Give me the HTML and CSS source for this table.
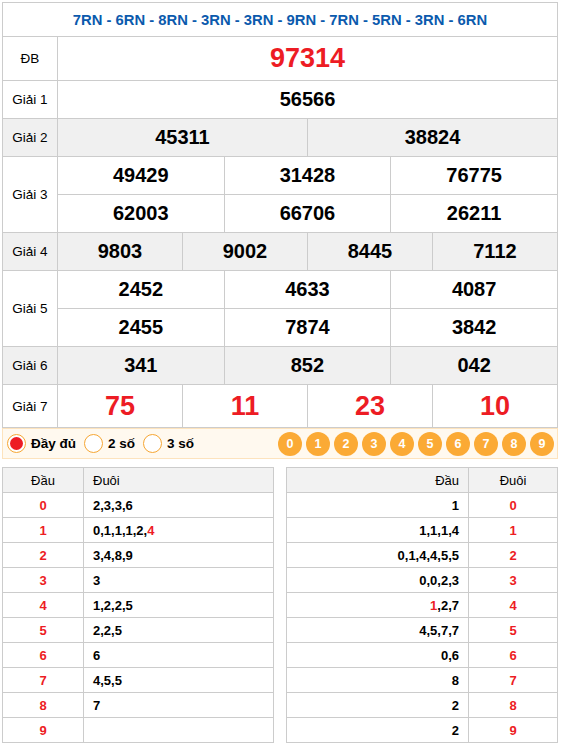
FILE: index.html
```html
<!DOCTYPE html>
<html lang="vi">
<head>
<meta charset="utf-8">
<title>XSMB</title>
<link rel="stylesheet" href="styles.css">
</head>
<body>
<div class="wrap">
  <table class="kq">
    <colgroup><col class="c-label"><col span="12"></colgroup>
    <tr class="r-head"><td colspan="13" class="head">7RN - 6RN - 8RN - 3RN - 3RN - 9RN - 7RN - 5RN - 3RN - 6RN</td></tr>
    <tr class="r-db"><td class="lbl">ĐB</td><td colspan="12" class="num db">97314</td></tr>
    <tr class="r"><td class="lbl">Giải 1</td><td colspan="12" class="num">56566</td></tr>
    <tr class="r gray"><td class="lbl">Giải 2</td><td colspan="6" class="num">45311</td><td colspan="6" class="num">38824</td></tr>
    <tr class="r"><td class="lbl" rowspan="2">Giải 3</td><td colspan="4" class="num">49429</td><td colspan="4" class="num">31428</td><td colspan="4" class="num">76775</td></tr>
    <tr class="r"><td colspan="4" class="num">62003</td><td colspan="4" class="num">66706</td><td colspan="4" class="num">26211</td></tr>
    <tr class="r gray"><td class="lbl">Giải 4</td><td colspan="3" class="num">9803</td><td colspan="3" class="num">9002</td><td colspan="3" class="num">8445</td><td colspan="3" class="num">7112</td></tr>
    <tr class="r"><td class="lbl" rowspan="2">Giải 5</td><td colspan="4" class="num">2452</td><td colspan="4" class="num">4633</td><td colspan="4" class="num">4087</td></tr>
    <tr class="r"><td colspan="4" class="num">2455</td><td colspan="4" class="num">7874</td><td colspan="4" class="num">3842</td></tr>
    <tr class="r gray"><td class="lbl">Giải 6</td><td colspan="4" class="num">341</td><td colspan="4" class="num">852</td><td colspan="4" class="num">042</td></tr>
    <tr class="r-g7"><td class="lbl">Giải 7</td><td colspan="3" class="num big">75</td><td colspan="3" class="num big">11</td><td colspan="3" class="num big">23</td><td colspan="3" class="num big">10</td></tr>
  </table>

  <div class="opts">
    <div class="radios">
      <label class="radio"><span class="dot on"></span><span>Đầy đủ</span></label>
      <label class="radio"><span class="dot"></span><span>2 số</span></label>
      <label class="radio"><span class="dot"></span><span>3 số</span></label>
    </div>
    <div class="balls">
      <span class="ball">0</span><span class="ball">1</span><span class="ball">2</span><span class="ball">3</span><span class="ball">4</span><span class="ball">5</span><span class="ball">6</span><span class="ball">7</span><span class="ball">8</span><span class="ball">9</span>
    </div>
  </div>

  <div class="lotos">
    <table class="loto left">
      <tr class="th"><td class="dau">Đầu</td><td class="duoi">Đuôi</td></tr>
      <tr><td class="dau red">0</td><td class="duoi">2,3,3,6</td></tr>
      <tr><td class="dau red">1</td><td class="duoi">0,1,1,1,2,<span class="red">4</span></td></tr>
      <tr><td class="dau red">2</td><td class="duoi">3,4,8,9</td></tr>
      <tr><td class="dau red">3</td><td class="duoi">3</td></tr>
      <tr><td class="dau red">4</td><td class="duoi">1,2,2,5</td></tr>
      <tr><td class="dau red">5</td><td class="duoi">2,2,5</td></tr>
      <tr><td class="dau red">6</td><td class="duoi">6</td></tr>
      <tr><td class="dau red">7</td><td class="duoi">4,5,5</td></tr>
      <tr><td class="dau red">8</td><td class="duoi">7</td></tr>
      <tr><td class="dau red">9</td><td class="duoi"></td></tr>
    </table>
    <table class="loto right">
      <tr class="th"><td class="dau">Đầu</td><td class="duoi">Đuôi</td></tr>
      <tr><td class="dau">1</td><td class="duoi red">0</td></tr>
      <tr><td class="dau">1,1,1,4</td><td class="duoi red">1</td></tr>
      <tr><td class="dau">0,1,4,4,5,5</td><td class="duoi red">2</td></tr>
      <tr><td class="dau">0,0,2,3</td><td class="duoi red">3</td></tr>
      <tr><td class="dau"><span class="red">1</span>,2,7</td><td class="duoi red">4</td></tr>
      <tr><td class="dau">4,5,7,7</td><td class="duoi red">5</td></tr>
      <tr><td class="dau">0,6</td><td class="duoi red">6</td></tr>
      <tr><td class="dau">8</td><td class="duoi red">7</td></tr>
      <tr><td class="dau">2</td><td class="duoi red">8</td></tr>
      <tr><td class="dau">2</td><td class="duoi red">9</td></tr>
    </table>
  </div>
</div>
</body>
</html>
```

FILE: styles.css
```css
* { box-sizing: border-box; }
html, body { margin: 0; padding: 0; background: #fff; }
body {
  font-family: "Liberation Sans", Arial, sans-serif;
  color: #000;
  padding: 2px;
}
.wrap { width: 556px; }

.kq {
  width: 556px;
  border-collapse: collapse;
  table-layout: fixed;
}
.kq .c-label { width: 55px; }
.kq td {
  border: 1px solid #cccccc;
  text-align: center;
  vertical-align: middle;
  padding: 0;
}
.kq .r-head { height: 34px; }
.kq .r-db { height: 44px; }
.kq .r { height: 38px; }
.kq .r-g7 { height: 43px; }
.kq .gray td { background: #f0f0f0; }
.kq .head {
  color: #0b5aad;
  font-weight: bold;
  font-size: 14.8px;
}
.kq .lbl { font-size: 13.5px; }
.kq .num { font-weight: bold; font-size: 20px; }
.kq .db, .kq .big { color: #ed1c24; font-size: 27px; }

.opts {
  margin-top: 0;
  height: 31px;
  border: 1px solid #fde3bd;
  background: #fff9ef;
  display: flex;
  align-items: center;
  justify-content: space-between;
  padding: 0 3px 0 4px;
}
.radios { display: flex; align-items: center; }
.radio {
  display: flex;
  align-items: center;
  font-weight: bold;
  font-size: 13.5px;
  margin-right: 8px;
}
.dot {
  width: 19px;
  height: 19px;
  border-radius: 50%;
  border: 1px solid #f6a633;
  background: #fff;
  margin-right: 5px;
  display: inline-flex;
  align-items: center;
  justify-content: center;
}
.dot.on::after {
  content: "";
  width: 13px;
  height: 13px;
  border-radius: 50%;
  background: #ed1c24;
}
.balls { display: flex; gap: 4px; }
.ball {
  width: 24px;
  height: 24px;
  border-radius: 50%;
  background: #fbaa35;
  color: #fff;
  font-weight: bold;
  font-size: 12.5px;
  display: flex;
  align-items: center;
  justify-content: center;
}

.lotos {
  display: flex;
  justify-content: space-between;
  margin-top: 8px;
}
.loto {
  border-collapse: collapse;
  table-layout: fixed;
  width: 272px;
}
.loto td {
  border: 1px solid #cccccc;
  height: 25px;
  padding: 0 9px;
  font-size: 13px;
  font-weight: bold;
  vertical-align: middle;
}
.loto .th td { background: #f2f2f2; font-weight: normal; }
.loto.left .dau { width: 81px; text-align: center; }
.loto.left .duoi { text-align: left; }
.loto.right .dau { text-align: right; }
.loto.right .duoi { width: 89px; text-align: center; }
.red { color: #ed1c24; }
```
